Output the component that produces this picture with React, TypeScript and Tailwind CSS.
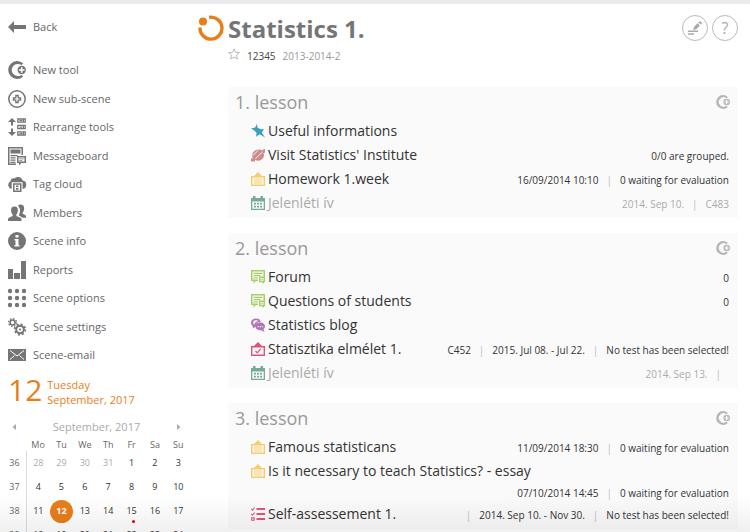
import type { ReactNode } from "react";

type IconName = keyof typeof navIcons;
type ToolType = "pin" | "group" | "homework" | "presence" | "forum" | "blog" | "test" | "survey";

interface Tool {
  type: ToolType;
  title: string;
  meta: string[];
  inactive?: boolean;
}

interface Lesson {
  title: string;
  tools: Tool[];
}

const navIcons = {
  back: <path d="M0 9l6-6v4h12v4H6v4z" />,
  newTool: (
    <>
      <path d="M15.3 2.6A8.9 8.9 0 1 0 15.3 15.4L13.400 13.9A6.1 6.1 0 1 1 13.400 4.1z" />
      <path d="M13.700 4.800A4.200 4.200 0 1 0 13.700 13.200A4.200 4.200 0 1 0 13.700 4.800M12.900 6.200h1.600v2h2v1.600h-2v2h-1.600v-2h-2V8.200h2z" fillRule="evenodd" />
    </>
  ),
  newScene: (
    <>
      <circle cx="9" cy="9" r="8.200" fill="none" stroke="currentColor" strokeWidth="1.500" />
      <path d="M7.200 4.800h3.600v2.400h2.400v3.600h-2.400v2.400H7.200v-2.400H4.800V7.200h2.400zM8.400 6.500v1.900H6.500v1.200h1.900v1.900h1.200V9.600h1.900V8.400H9.600V6.500z" fillRule="evenodd" />
    </>
  ),
  rearrange: (
    <>
      <path d="M4 0l4 4H5v3.500H3V4H0zM3 10.500h2V14h3l-4 4-4-4h3z" />
      <path d="M9.800 1h7.400v3.200H9.800zM9.800 7.400h7.400v3.200H9.800zM9.800 13.800h7.400V17H9.800z" fill="none" stroke="currentColor" strokeWidth="1.300" />
      <path d="M11.500 2h3v1.300h-3zM11.500 8.400h3v1.300h-3zM11.500 14.800h3v1.300h-3zM15 1h1v3h-1zM15 7.400h1v3h-1zM15 13.800h1V17h-1z" />
    </>
  ),
  board: (
    <>
      <path d="M0 0h15v8h-1.500V1.500h-12v15H8V18H0z" />
      <path d="M2.500 2.500h10v4h-10zM2.500 8h7v1.200h-7zM2.500 10.300h5v1.200h-5zM2.500 12.600h5v1.200h-5zM2.500 14.800h5V16h-5z" />
      <path d="M9 9h9v7h-4.500L11 18.500V16H9zM10.500 10.500v4h6v-4z" fillRule="evenodd" />
      <path d="M11.300 11.400h4.400v.8h-4.400zM11.300 13h3v.8h-3z" />
    </>
  ),
  cloud: (
    <>
      <path d="M3.700 14A4 4 0 0 1 2.400 6.500A3.500 3.500 0 0 1 6.300 3.400A5 5 0 0 1 14.600 5.500A4.300 4.300 0 0 1 14.600 14V7.200H3.700z" />
      <path d="M5 8.200h8.500V17H5zM6.500 9.700v5.800H12V9.700z" fillRule="evenodd" />
      <path d="M8 10.500h2.500v1.400H8zM8 13h2.500v1.800H8z" />
    </>
  ),
  members: (
    <>
      <path d="M6.500 2.500c2.500 0 3.600 1.600 3.400 4c-.1 1.700-.7 3-1.500 4v1.400l4.200 1.900c.6.300.9.900.9 1.500V17H0v-1.700c0-.6.300-1.200.9-1.500l3.700-1.900v-1.400c-.9-1-1.400-2.300-1.500-4c-.2-2.400.9-4 3.400-4z" />
      <path d="M10 2c1-1.500 2.400-1.600 3.700-1.200c2.600.6 2.700 3.200 2.300 5.200c-.2 1.100-.7 2-1.300 2.600v1.200l2.500 1.200c.5.300.8.700.8 1.300v1.500h-3.300l-3.800-2.200v-.8C12 9 12.500 6.200 11.600 4.300C11.200 3.200 10.700 2.500 10 2z" />
    </>
  ),
  info: (
    <path d="M9 0a9 9 0 1 0 0 18a9 9 0 1 0 0-18M7.500 3h3v2.500h-3zM6.500 7h4v6h1v1.500h-5V13h1V8.500h-1z" fillRule="evenodd" />
  ),
  reports: <path d="M0 8h5v10H0zM6 12h6v6H6zM13 0h5v18h-5z" />,
  options: (
    <>
      {[2, 9, 16].map((y) => [2, 9, 16].map((x) => <circle key={`${x}-${y}`} cx={x} cy={y} r="2.200" />))}
    </>
  ),
  settings: (
    <g fill="none" stroke="currentColor">
      <circle cx="4.600" cy="4.600" r="2.500" strokeWidth="1.500" />
      <circle cx="4.600" cy="4.600" r="3.900" strokeWidth="1.400" strokeDasharray="1.500 1.560" />
      <circle cx="12" cy="11.500" r="3.800" strokeWidth="2" />
      <circle cx="12" cy="11.500" r="5.300" strokeWidth="1.700" strokeDasharray="2 2.160" />
      <circle cx="12" cy="11.500" r="1.100" fill="currentColor" stroke="none" />
    </g>
  ),
  mail: (
    <>
      <path d="M0 3h18v12H0z" />
      <path d="M2 4.500l7 5.500l7-5.500M2 13.500l4.500-4M16 13.500l-4.500-4" fill="none" stroke="#fff" strokeWidth="1" />
    </>
  ),
};

const toolIcons: Record<ToolType, ReactNode> = {
  pin: (
    <path fill="#3b9fc0" d="M5.500 0l1.200 3.800l3 1.500l3.300-.3l-2.200 3.500L14 13.500L8.800 10.200l-3.600 2.600l.3-4L3.300 6.500L0 4.600l4.300-1z" />
  ),
  group: (
    <>
      <path d="M2.200 10.800C0 8 1.500 4 4.500 2.300C7 .9 9.500 1.200 11 2.600L13 1h1v3.500l-1.500.7c1.300 2.600 0 5.300-2.500 6.700c-2 1.100-4.300 1-5.800-.1L4 13.500H0V10z" fill="#cb8b8b" />
      <path d="M4.500 10.500L11.500 4M2 7.500l5-5" fill="none" stroke="#fafafa" strokeWidth="1" />
    </>
  ),
  homework: (
    <g fill="#f6cd6e">
      <path d="M7 0l4 4H3zM0 4h14v10H0zM1.500 5.500v7h11v-7z" fillRule="evenodd" />
      <path d="M3 6.500h8v1H3zM3 8.600h8v1H3zM3 10.600h8v1H3z" />
    </g>
  ),
  presence: (
    <g fill="#79a99a">
      <path d="M0 2h14v12H0zM1.300 5.500v7.200h11.400V5.500z" fillRule="evenodd" />
      <path d="M2 0h2.500v4H2zM9.500 0H12v4H9.500zM3 6.800h2v1.800H3zM6 6.800h2v1.800H6zM9 6.800h2v1.800H9zM3 9.700h2v1.800H3zM6 9.700h2v1.800H6zM9 9.700h2v1.800H9z" />
    </g>
  ),
  forum: (
    <g fill="#a6d069">
      <path d="M0 0h14v7h-1.500V1.500h-11v8H7V11H5L2.500 13.500V11H0z" />
      <path d="M2.500 2.800h9v1.300h-9zM2.500 5h7v1.300h-7zM2.500 7.200H7v1.300H2.500z" />
      <path d="M8 6.500h6v5.700h-1.200V14l-2-1.800H8zM9.500 8v2.700h3V8z" fillRule="evenodd" />
      <path d="M10.300 8.800h1.400v1.100h-1.400z" />
    </g>
  ),
  blog: (
    <>
      <path d="M4.700.5C-1 .8-1 7 2 8.300L1.500 10.500L5 8.500c-.6-3 1.500-4.700 4.800-4.500C9.400 1.500 7.500.4 4.700.5zM4.500 2.200c-2.700.3-3.300 3.200-.9 4.500C3.600 4.600 5 3.400 7.500 3c-.7-.7-1.900-1-3-.8z" fill="#b273b5" fillRule="evenodd" />
      <path d="M9.300 4.500c3 0 4.700 1.800 4.700 3.800c0 1.200-.6 2.200-1.500 2.900L13.500 14l-3.400-1.700c-3.500.2-5.700-1.600-5.700-3.900s2-3.900 4.900-3.900z" fill="#b273b5" />
      <path d="M6.500 8h1.300v1.200H6.500zM8.700 8H10v1.200H8.700zM10.900 8h1.200v1.200h-1.200z" fill="#f2e4f3" />
    </>
  ),
  test: (
    <>
      <path d="M7 0l4 4H3zM0 4h14v10H0zM1.400 5.500v7.100h11.200V5.500z" fill="#e0517c" fillRule="evenodd" />
      <path d="M4.500 9l1.800 1.900l3.400-4" fill="none" stroke="#e0517c" strokeWidth="1.200" />
    </>
  ),
  survey: (
    <g fill="none" stroke="#dd5580">
      <path d="M5.500 2H14M5.500 7H14M5.500 12H14" strokeWidth="1.800" />
      <path d="M.4 1.800l1.100 1.400L3.700.5M.4 6.800l1.100 1.400l2.200-2.700M.7 10.700h2.500v2.500H.7z" strokeWidth="1.100" />
    </g>
  ),
};

const menu: { icon: IconName; label: string }[] = [
  { icon: "newTool", label: "New tool" },
  { icon: "newScene", label: "New sub-scene" },
  { icon: "rearrange", label: "Rearrange tools" },
  { icon: "board", label: "Messageboard" },
  { icon: "cloud", label: "Tag cloud" },
  { icon: "members", label: "Members" },
  { icon: "info", label: "Scene info" },
  { icon: "reports", label: "Reports" },
  { icon: "options", label: "Scene options" },
  { icon: "settings", label: "Scene settings" },
  { icon: "mail", label: "Scene-email" },
];

const lessons: Lesson[] = [
  {
    title: "1. lesson",
    tools: [
      { type: "pin", title: "Useful informations", meta: [] },
      { type: "group", title: "Visit Statistics' Institute", meta: ["0/0 are grouped."] },
      { type: "homework", title: "Homework 1.week", meta: ["16/09/2014 10:10", "0 waiting for evaluation"] },
      { type: "presence", title: "Jelenléti ív", meta: ["2014. Sep 10.", "C483"], inactive: true },
    ],
  },
  {
    title: "2. lesson",
    tools: [
      { type: "forum", title: "Forum", meta: ["0"] },
      { type: "forum", title: "Questions of students", meta: ["0"] },
      { type: "blog", title: "Statistics blog", meta: [] },
      { type: "test", title: "Statisztika elmélet 1.", meta: ["C452", "2015. Jul 08. - Jul 22.", "No test has been selected!"] },
      { type: "presence", title: "Jelenléti ív", meta: ["2014. Sep 13.", ""], inactive: true },
    ],
  },
  {
    title: "3. lesson",
    tools: [
      { type: "homework", title: "Famous statisticans", meta: ["11/09/2014 18:30", "0 waiting for evaluation"] },
      { type: "homework", title: "Is it necessary to teach Statistics? - essay", meta: ["07/10/2014 14:45", "0 waiting for evaluation"] },
      { type: "survey", title: "Self-assessement 1.", meta: ["", "2014. Sep 10. - Nov 30.", "No test has been selected!"] },
    ],
  },
];

const weekDays = ["Mo", "Tu", "We", "Th", "Fr", "Sa", "Su"];

const weeks = [
  { no: 36, days: [28, 29, 30, 31, 1, 2, 3] },
  { no: 37, days: [4, 5, 6, 7, 8, 9, 10] },
  { no: 38, days: [11, 12, 13, 14, 15, 16, 17] },
  { no: 39, days: [18, 19, 20, 21, 22, 23, 24] },
];

function NavLink({ icon, label }: { icon: IconName; label: string }) {
  return (
    <a href="#" className="flex items-center gap-[7px] text-[11px] leading-4 text-[#666]">
      <svg viewBox="0 0 18 18" className="size-[18px] overflow-visible text-[#757575]" fill="currentColor" aria-hidden="true">
        {navIcons[icon]}
      </svg>
      {label}
    </a>
  );
}

function Calendar() {
  return (
    <div className="pt-[2px] pl-[3px]">
      <div className="flex h-5 items-center justify-between px-[9px] text-[11px] text-[#aaa]">
        <button type="button" aria-label="Previous month">
          <svg viewBox="0 0 5 8" className="h-2 w-[5px]" fill="currentColor"><path d="M4 1v6L.5 4z" /></svg>
        </button>
        <span>September, 2017</span>
        <button type="button" aria-label="Next month">
          <svg viewBox="0 0 5 8" className="h-2 w-[5px]" fill="currentColor"><path d="M1 1v6L4.500 4z" /></svg>
        </button>
      </div>
      <table className="w-full table-fixed text-center text-[9px] leading-3 font-medium text-[#333]">
        <thead>
          <tr className="h-[14px] text-[#666]">
            <th className="p-0" aria-label="Week" />
            {weekDays.map((day) => (
              <th key={day} className="p-0 pt-[2px] font-medium">{day}</th>
            ))}
          </tr>
        </thead>
        <tbody>
          {weeks.map((week) => (
            <tr key={week.no} className="h-6">
              <th className="border-r border-[#ddd] p-0 font-medium text-[#666]">{week.no}</th>
              {week.days.map((day) => {
                const otherMonth = week.no === 36 && day > 20;
                if (day === 12) {
                  return (
                    <td key={day} className="p-0">
                      <span className="mx-auto flex size-[23px] items-center justify-center rounded-full bg-[#e87e1a] font-bold text-white">
                        12
                      </span>
                    </td>
                  );
                }
                return (
                  <td key={day} className={otherMonth ? "p-0 text-[#aaa]" : "relative p-0"}>
                    {day}
                    {day === 15 && <span className="absolute right-2 bottom-0 size-[3px] rounded-full bg-red-600" />}
                  </td>
                );
              })}
            </tr>
          ))}
        </tbody>
      </table>
    </div>
  );
}

function Sidebar() {
  return (
    <aside className="w-[190px] shrink-0">
      <div className="pt-[14px] pl-2">
        <NavLink icon="back" label="Back" />
        <nav className="pt-5">
          <ul>
            {menu.map((item) => (
              <li key={item.label} className="flex items-center odd:h-7 even:h-[29px]">
                <NavLink icon={item.icon} label={item.label} />
              </li>
            ))}
          </ul>
        </nav>
        <div className="flex h-[46px] items-center gap-[5px] text-[#e87e1a]">
          <span className="pb-1 text-[30px] leading-9">12</span>
          <div className="text-[11px] leading-[15px]">
            <p>Tuesday</p>
            <p>September, 2017</p>
          </div>
        </div>
      </div>
      <Calendar />
    </aside>
  );
}

function ToolRow({ tool }: { tool: Tool }) {
  return (
    <li className={tool.inactive ? "flex flex-wrap items-center text-[#aaa]" : "flex flex-wrap items-center text-[#333]"}>
      <a href="#" className="flex h-6 items-center gap-[3px] text-sm">
        <svg viewBox="0 0 14 14" className="size-[14px]" aria-hidden="true">{toolIcons[tool.type]}</svg>
        {tool.title}
      </a>
      {tool.meta.length > 0 && (
        <div className="ml-auto flex pt-px text-[10px] leading-[18px]">
          {tool.meta.map((text, i) => (
            <span key={i}>
              {i > 0 && <span className="px-2 text-[#bbb]">|</span>}
              {text}
            </span>
          ))}
        </div>
      )}
    </li>
  );
}

function LessonPanel({ lesson }: { lesson: Lesson }) {
  return (
    <section className="bg-[#fafafa] pr-[9px] pb-[3px] pl-[7px]">
      <div className="flex h-8 items-center justify-between pb-[2px]">
        <h2 className="text-lg text-[#999]">{lesson.title}</h2>
        <button type="button" aria-label="New tool" className="-mr-px">
          <svg viewBox="0 0 18 18" className="size-[14px] text-[#b5b5b5]" fill="currentColor">{navIcons.newTool}</svg>
        </button>
      </div>
      <ul className="pl-4">
        {lesson.tools.map((tool, i) => (
          <ToolRow key={i} tool={tool} />
        ))}
      </ul>
    </section>
  );
}

export default function App() {
  return (
    <div className="relative h-screen overflow-hidden border-t-4 border-[#ebebeb] bg-white font-['Open_Sans',sans-serif]">
      <div className="flex">
        <Sidebar />
        <main className="min-w-0 grow pr-3 pl-2">
          <header className="flex h-[83px] items-start gap-1 pt-[11px]">
            <svg viewBox="0 0 26 26" className="size-[26px] shrink-0" aria-hidden="true">
              <path d="M11 2.300A11 11 0 1 1 2 12.500" fill="none" stroke="#e87e1a" strokeWidth="3.400" />
              <circle cx="5" cy="6.500" r="4" fill="#e87e1a" />
            </svg>
            <div className="grow">
              <h1 className="text-2xl leading-7 font-bold text-[#757575]">Statistics 1.</h1>
              <p className="flex items-center pt-1 text-[10px] leading-[18px]">
                <button type="button" aria-label="Favourite" className="mr-[7px] pb-1">
                  <svg viewBox="0 0 12 12" className="size-3" fill="none" stroke="#bbb">
                    <path d="M6 .8l1.500 3.500l3.900.3l-3 2.500l1 3.900L6 9l-3.400 2l1-3.900l-3-2.500l3.900-.3z" />
                  </svg>
                </button>
                <span className="mr-[7px] text-[#444]">12345</span>
                <span className="text-[#999]">2013-2014-2</span>
              </p>
            </div>
            <button type="button" aria-label="Edit" className="flex size-[26px] items-center justify-center rounded-full border border-[#bbb] text-[#aaa]">
              <svg viewBox="0 0 14 14" className="size-[14px]" fill="currentColor">
                <path d="M11.800 0l2.200 2l-1.300 1.600l-2.500-2.200zM9.400 2.200l2.500 2.200l-3.600 3.900l-3.100.8l.8-3.200zM0 9.400h10v1.500H0zM0 12.200h6v1.500H0z" />
              </svg>
            </button>
            <button type="button" aria-label="Help" className="flex size-[26px] items-center justify-center rounded-full border border-[#bbb] text-base text-[#aaa]">
              ?
            </button>
          </header>
          <div className="flex flex-col gap-[15px] pl-[30px]">
            {lessons.map((lesson) => (
              <LessonPanel key={lesson.title} lesson={lesson} />
            ))}
          </div>
        </main>
      </div>
      <div className="pointer-events-none absolute inset-x-0 bottom-0 h-9 bg-linear-to-b from-transparent to-black/6" />
    </div>
  );
}
